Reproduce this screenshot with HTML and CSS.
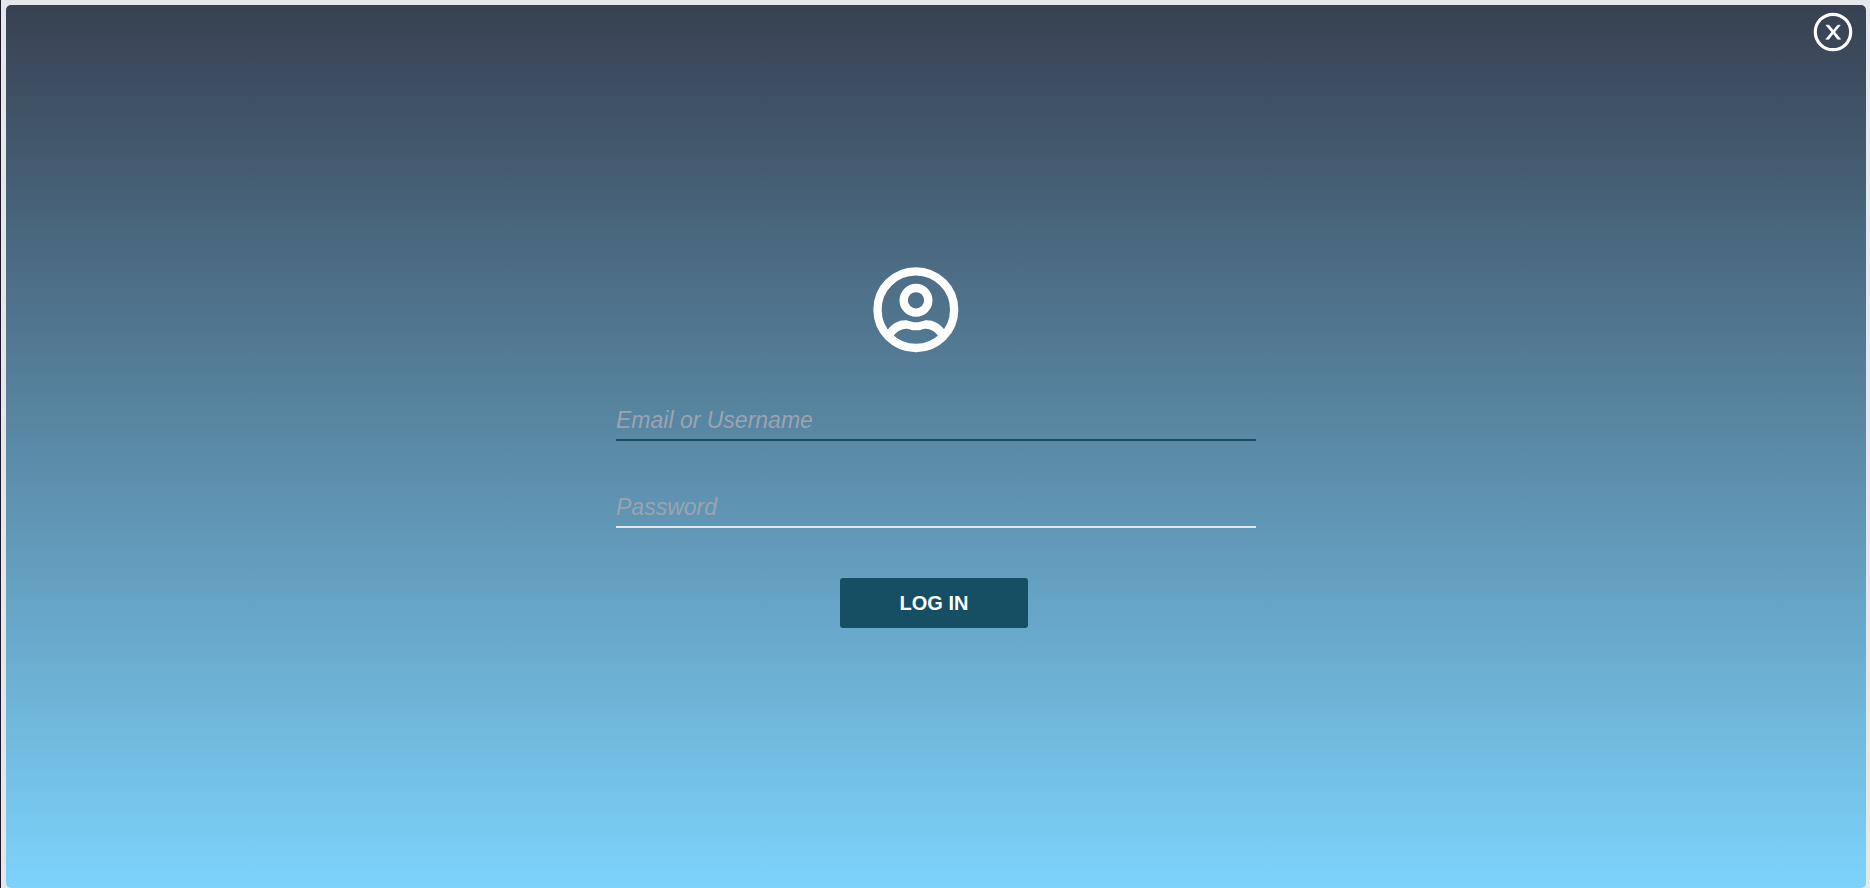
FILE: index.html
```html
<!DOCTYPE html>
<html lang="en">
<head>
<meta charset="utf-8">
<title>Log in</title>
<link rel="stylesheet" href="styles.css">
</head>
<body>
<main class="panel">
  <header class="panel-top">
    <button class="close" type="button" aria-label="Close">
      <svg viewBox="0 0 40 40" aria-hidden="true">
        <circle cx="20" cy="20" r="17.7" fill="none" stroke="#fff" stroke-width="3.2"/>
        <path d="M13 13.200H16L20.300 18.500 24.600 13.200H27.200L21.700 20 27.600 27.200H24.600L20.200 21.600 15.800 27.200H12.800L18.800 20Z" fill="#fff" stroke="#fff" stroke-width="0.7"/>
      </svg>
    </button>
  </header>
  <form class="login">
    <svg class="avatar" viewBox="40 35 258 258" aria-hidden="true">
      <circle cx="168.500" cy="163" r="115" fill="none" stroke="#fff" stroke-width="25"/>
      <circle cx="169" cy="135" r="37" fill="none" stroke="#fff" stroke-width="25"/>
      <path d="M83 224C98 205 116 195 137 195C146 195 153 201 169 201C185 201 192 195 201 195C222 195 240 205 255 224L236 242C226 229 213 220 198 220C189 220 184 225 169 225C154 225 149 220 140 220C125 220 111 229 101 242Z" fill="#fff"/>
    </svg>
    <input class="field field-user" type="text" placeholder="Email or Username" aria-label="Email or Username">
    <input class="field" type="password" placeholder="Password" aria-label="Password">
    <button class="submit" type="submit">LOG IN</button>
  </form>
</main>
</body>
</html>
```
FILE: styles.css
```css
* {
  box-sizing: border-box;
}

body {
  margin: 0;
  background: #e5e7eb;
  border-left: 1px solid #1b1b2b;
  font-family: "Liberation Sans", Arial, sans-serif;
}

.panel {
  min-height: calc(100vh - 5px);
  margin: 5px 4px 0 5px;
  border-radius: 5px;
  background: linear-gradient(#374151, #7dd3fc);
  display: flex;
  flex-direction: column;
}

.panel-top {
  display: flex;
  justify-content: flex-end;
  padding: 7px 13px 0 0;
}

.close {
  width: 40px;
  height: 40px;
  padding: 0;
  border: 0;
  background: none;
  cursor: pointer;
}

.close svg {
  display: block;
}

.login {
  width: 640px;
  max-width: 100%;
  margin: 215px auto 0;
  display: flex;
  flex-direction: column;
  align-items: center;
}

.avatar {
  width: 86px;
  height: 86px;
  margin: 0 40px 48px 0;
}

.field {
  width: 100%;
  height: 40px;
  margin-bottom: 47px;
  padding: 0;
  border: 0;
  border-bottom: 2px solid #e5e7eb;
  background: none;
  outline: none;
  color: #fff;
  font: italic 23px "Liberation Sans", Arial, sans-serif;
}

.field-user {
  border-bottom-color: #164e63;
}

.field::placeholder {
  color: #9ca3af;
  opacity: 1;
}

.submit {
  width: 188px;
  height: 50px;
  margin: 3px 4px 0 0;
  border: 0;
  border-radius: 3px;
  background: #164e63;
  color: #fff;
  font: bold 20px "Liberation Sans", Arial, sans-serif;
  cursor: pointer;
}
```
